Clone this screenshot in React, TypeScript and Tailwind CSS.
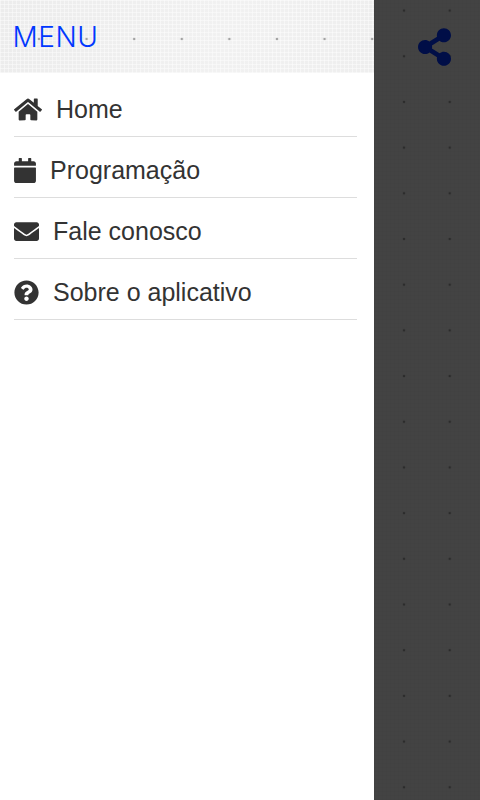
import type { IconType } from "react-icons";
import {
  FaCalendar,
  FaEnvelope,
  FaHome,
  FaQuestionCircle,
  FaShareAlt,
} from "react-icons/fa";

const items: { label: string; icon: IconType; width: string }[] = [
  { label: "Home", icon: FaHome, width: "w-[28px]" },
  { label: "Programação", icon: FaCalendar, width: "w-[22px]" },
  { label: "Fale conosco", icon: FaEnvelope, width: "w-[25px]" },
  { label: "Sobre o aplicativo", icon: FaQuestionCircle, width: "w-[25px]" },
];

function MenuItem({
  label,
  icon: Icon,
  width,
}: {
  label: string;
  icon: IconType;
  width: string;
}) {
  return (
    <li className="flex h-[61px] items-end border-b border-[#dddddd]">
      <a href="#" className="flex h-[53px] items-center gap-[14px]">
        <Icon className={`h-[25px] shrink-0 ${width}`} />
        <span className="pb-[2px] whitespace-nowrap">{label}</span>
      </a>
    </li>
  );
}

export default function App() {
  return (
    <div className="flex h-[800px] w-[480px] overflow-hidden bg-white font-['Liberation_Sans',Arial,sans-serif] text-[25px] leading-[30px] text-[#333333]">
      <aside className="w-[374px] shrink-0 bg-white">
        {/* woven paper texture with a row of dots */}
        <header className="flex h-[73px] items-center bg-[#f1f1f1] bg-[radial-gradient(circle_at_50%_50%,#9b9b9b_0.6px,transparent_1.7px),repeating-linear-gradient(90deg,#ffffff70_0_1px,transparent_1px_4px),repeating-linear-gradient(0deg,#ffffff70_0_1px,transparent_1px_4px),linear-gradient(100deg,#ececec,#f1f1f1_60%,#eeeeee)] bg-[size:47.6px_90px,auto,auto,auto] bg-[position:15.2px_-6px,0_0,0_0,0_0] px-[12.5px]">
          <h1 className="pt-px font-['Inter',sans-serif] text-[28px] font-light tracking-[0.5px] text-[#0038ff]">
            MENU
          </h1>
        </header>
        <nav className="px-[14px]">
          <ul className="w-[343px] pt-[3px]">
            {items.map((item) => (
              <MenuItem key={item.label} {...item} />
            ))}
          </ul>
        </nav>
      </aside>
      {/* dimmed page behind the drawer */}
      <main className="flex flex-1 justify-end bg-[#434343] bg-[radial-gradient(circle_at_50%_50%,#292929_0.6px,transparent_1.7px),repeating-linear-gradient(90deg,#00000005_0_1px,transparent_1px_4px),repeating-linear-gradient(0deg,#00000005_0_1px,transparent_1px_4px)] bg-[size:45.7px_45.7px,auto,auto] bg-[position:7.2px_-12.3px,0_0,0_0] pt-[28px] pr-[29px]">
        <button className="h-[38px]" aria-label="Compartilhar">
          <FaShareAlt className="h-[38px] w-[33px] text-[#000e47]" />
        </button>
      </main>
    </div>
  );
}
